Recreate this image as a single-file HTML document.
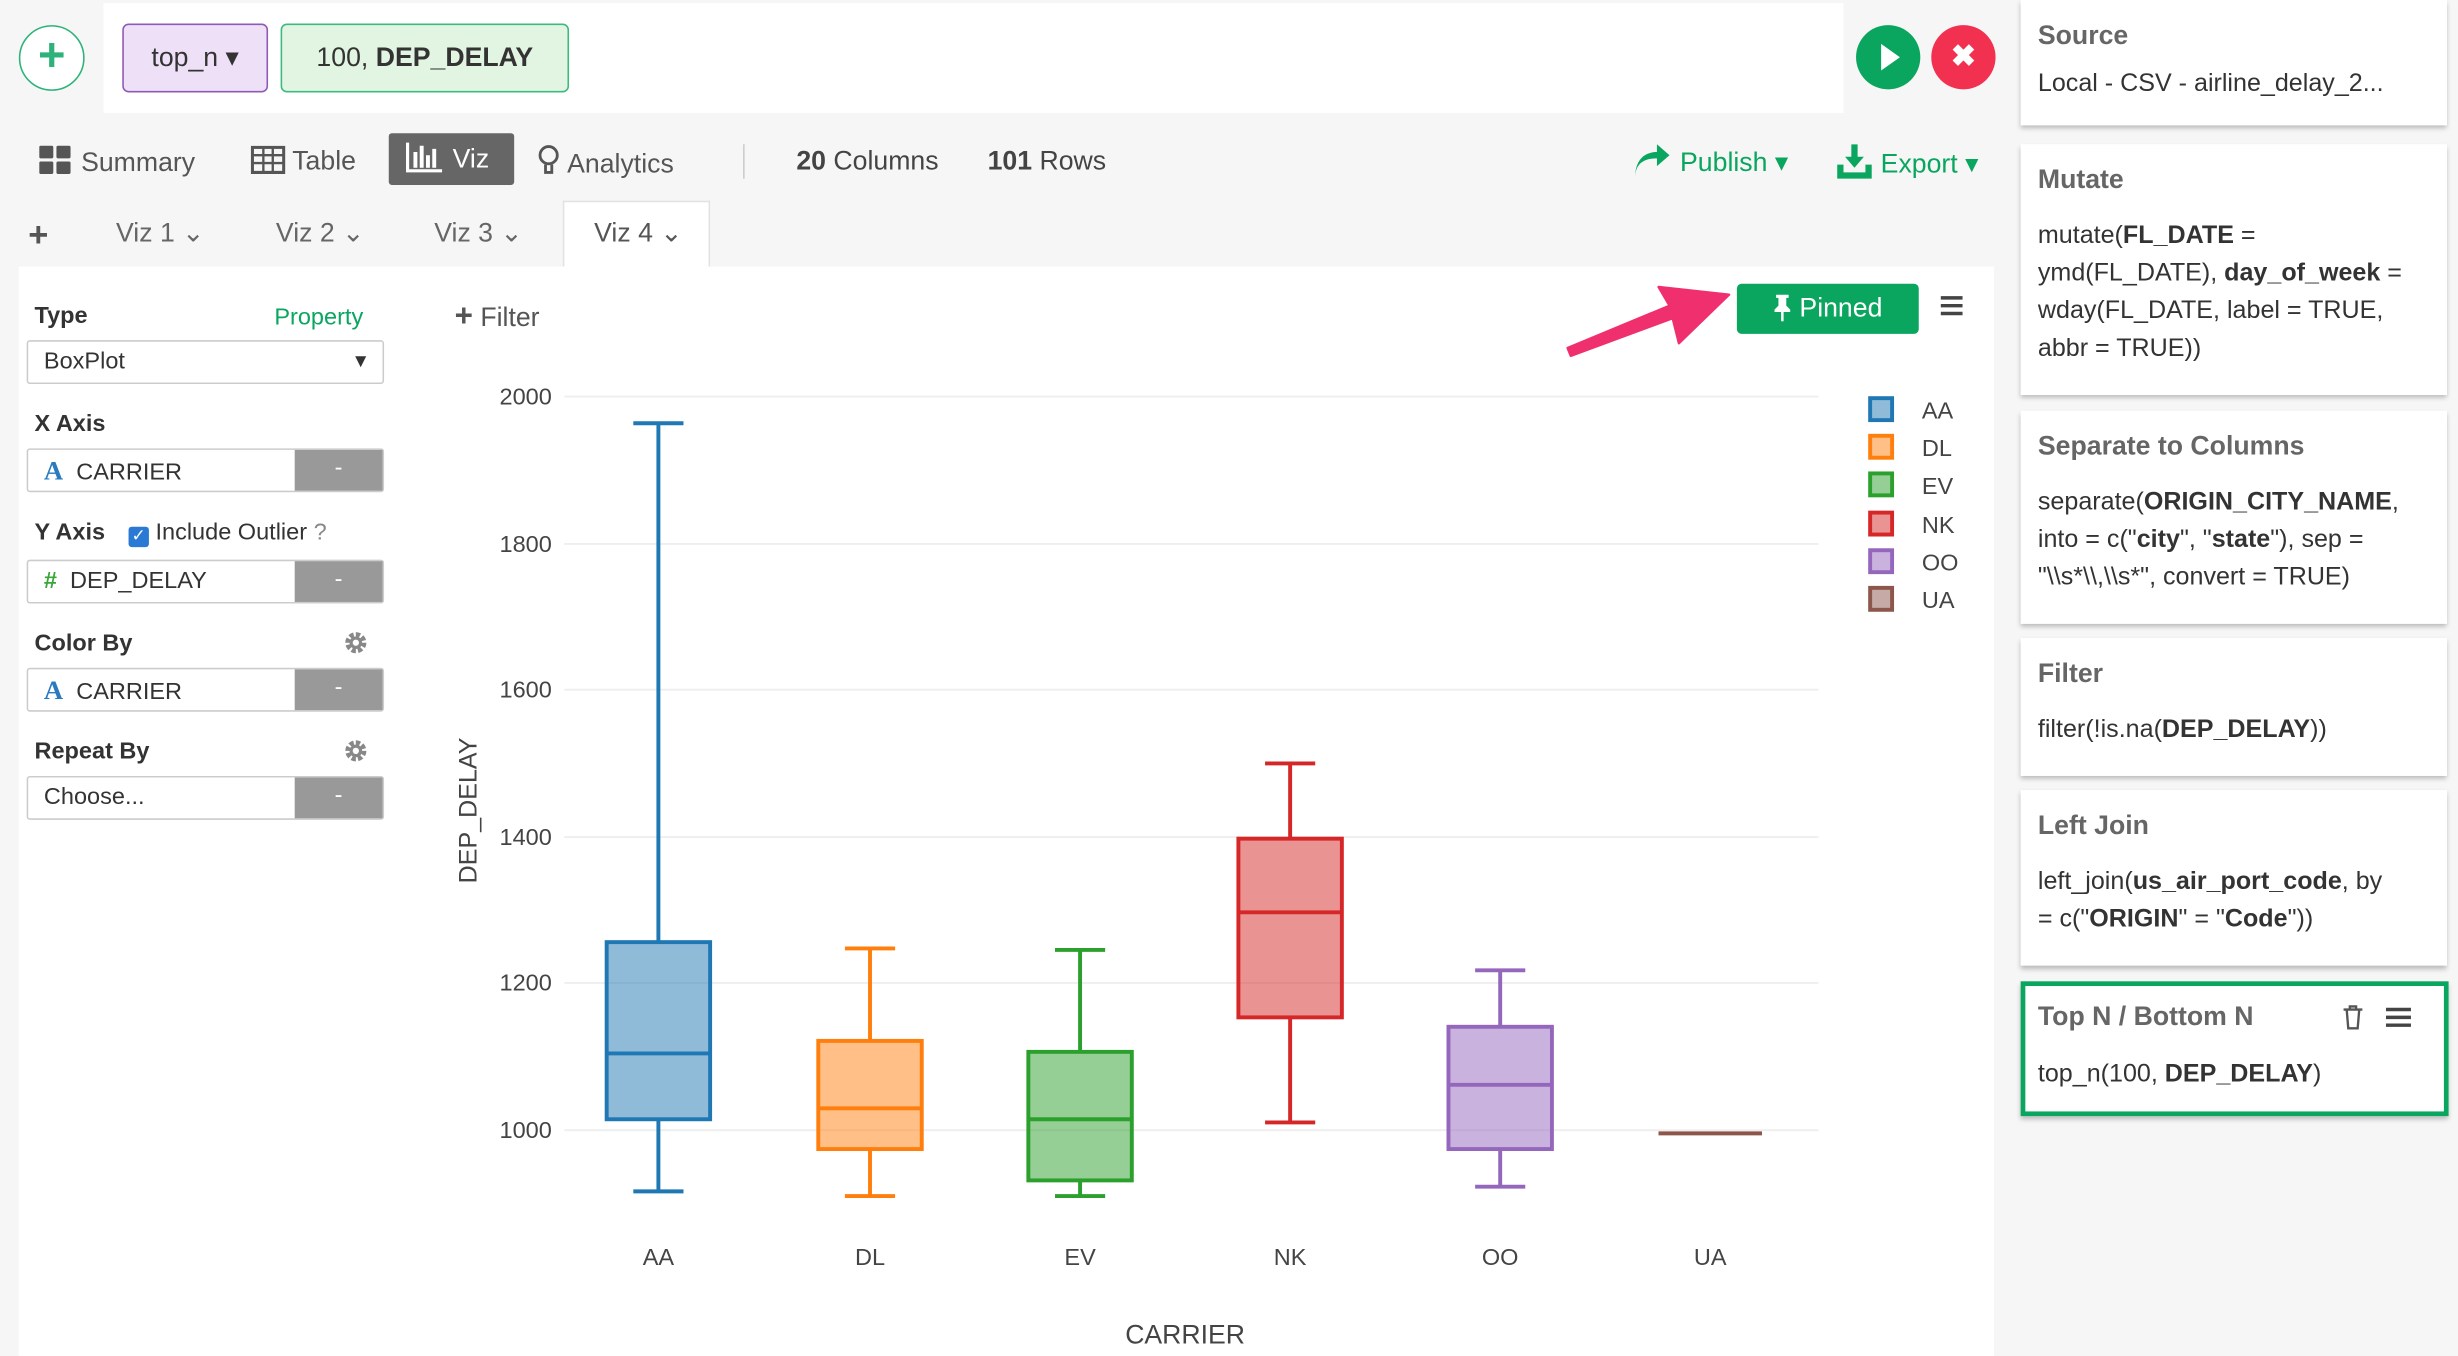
<!DOCTYPE html>
<html><head><meta charset="utf-8"><style>
html,body{margin:0;padding:0;width:2458px;height:1356px;overflow:hidden;background:#f6f6f6;font-family:"Liberation Sans",sans-serif;}
#w{position:absolute;left:0;top:0;width:1568px;height:865px;transform:scale(1.56760);transform-origin:0 0;background:#f6f6f6;color:#333;}
.a{position:absolute;}
.card{position:absolute;left:1289px;width:272px;background:#fff;box-shadow:0 2px 3px rgba(0,0,0,.25);}
.card .t{position:absolute;left:11px;font-size:17px;font-weight:bold;color:#666;}
.card .b{position:absolute;left:11px;right:8px;font-size:16px;line-height:24px;color:#333;}
.lbl{font-size:15px;font-weight:bold;color:#333;}
.inp{position:absolute;left:17px;width:226px;height:26px;border:1px solid #ccc;border-radius:2px;background:#fff;font-size:15px;}
.inp .m{position:absolute;right:0;top:0;width:56px;height:26px;background:#999;color:#fff;text-align:center;line-height:24px;}
.inp .x{position:absolute;left:10px;top:4px;}
</style></head><body><div id="w">
<div class="a" style="left:66px;top:2px;width:1110px;height:70px;background:#fff"></div>
<div class="a" style="left:12px;top:16px;width:40px;height:40px;border:1.5px solid #2db37a;border-radius:50%;background:#fff;color:#2db37a;font-size:30px;text-align:center;line-height:38px;font-weight:bold">+</div>
<div class="a" style="left:78px;top:15px;width:91px;height:42px;background:#eee0f7;border:1.5px solid #8e5ab5;border-radius:4px;font-size:17px;line-height:42px;text-align:center">top_n ▾</div>
<div class="a" style="left:179px;top:15px;width:182px;height:42px;background:#e2f4e2;border:1.5px solid #3dba7d;border-radius:4px;font-size:17px;line-height:42px;text-align:center">100, <b>DEP_DELAY</b></div>
<div class="a" style="left:1184px;top:16px;width:41px;height:41px;border-radius:50%;background:#0aa65f"><svg width="41" height="41"><path d="M16 12 L28 20.5 L16 29Z" fill="#fff"/></svg></div>
<div class="a" style="left:1232px;top:16px;width:41px;height:41px;border-radius:50%;background:#f23050;color:#fff;font-size:19px;font-weight:bold;text-align:center;line-height:41px">✖</div>
<div class="a" style="left:25px;top:92px;font-size:17px;color:#555;line-height:22px">
<svg width="22" height="20" style="vertical-align:-3px"><rect x="0" y="1" width="9" height="8" rx="1" fill="#555"/><rect x="11" y="1" width="9" height="8" rx="1" fill="#555"/><rect x="0" y="11" width="9" height="8" rx="1" fill="#555"/><rect x="11" y="11" width="9" height="8" rx="1" fill="#555"/></svg> Summary</div>
<div class="a" style="left:160px;top:92px;font-size:17px;color:#555;line-height:22px"><svg width="22" height="18" style="vertical-align:-3px"><rect x="1" y="1" width="20" height="16" fill="none" stroke="#555" stroke-width="2"/><path d="M1 6H21M1 11H21M8 1V17M14 1V17" stroke="#555" stroke-width="1.5"/></svg> Table</div>
<div class="a" style="left:248px;top:85px;width:80px;height:33px;background:#666;border-radius:2px;color:#fff;font-size:17px;line-height:33px"><svg width="26" height="22" style="vertical-align:-4px;margin-left:10px"><path d="M2 2V20H24" stroke="#fff" stroke-width="2" fill="none"/><path d="M7 8V18M11 4V18M15 10V18M19 6V18" stroke="#fff" stroke-width="2.5"/></svg> Viz</div>
<div class="a" style="left:342px;top:92px;font-size:17px;color:#555;line-height:22px"><svg width="16" height="22" style="vertical-align:-4px"><circle cx="8" cy="7" r="5.5" fill="none" stroke="#555" stroke-width="1.8"/><path d="M6 13V18H10V13" stroke="#555" stroke-width="1.8" fill="none"/></svg> Analytics</div>
<div class="a" style="left:474px;top:92px;width:1px;height:22px;background:#ccc"></div>
<div class="a" style="left:508px;top:93px;font-size:17px;color:#444"><b>20</b> Columns</div>
<div class="a" style="left:630px;top:93px;font-size:17px;color:#444"><b>101</b> Rows</div>
<div class="a" style="left:1041px;top:92px;font-size:17px;color:#0aa65f"><svg width="26" height="22" style="vertical-align:-5px"><path d="M2 22C2 12 8 9 16 9V14L24 7L16 0V5C7 5 2 11 2 22Z" fill="#0aa65f"/></svg> Publish ▾</div>
<div class="a" style="left:1171px;top:92px;font-size:17px;color:#0aa65f"><svg width="24" height="22" style="vertical-align:-4px"><path d="M10 0H14V8H18L12 15L6 8H10Z M1 13H5V18H19V13H23V22H1Z" fill="#0aa65f"/></svg> Export ▾</div>
<div class="a" style="left:18px;top:137px;font-size:22px;font-weight:bold;color:#555">+</div>
<div class="a" style="left:74px;top:139px;font-size:17px;color:#666">Viz 1 ⌄</div>
<div class="a" style="left:176px;top:139px;font-size:17px;color:#666">Viz 2 ⌄</div>
<div class="a" style="left:277px;top:139px;font-size:17px;color:#666">Viz 3 ⌄</div>
<div class="a" style="left:359px;top:128px;width:92px;height:44px;background:#fff;border:1px solid #e2e2e2;border-bottom:none"></div>
<div class="a" style="left:379px;top:139px;font-size:17px;color:#555">Viz 4 ⌄</div>
<div class="a" style="left:12px;top:170px;width:1260px;height:695px;background:#fff"></div>
<div class="a lbl" style="left:22px;top:193px">Type</div>
<div class="a" style="left:175px;top:194px;font-size:15px;color:#0aa65f">Property</div>
<div class="inp" style="top:217px"><span class="x">BoxPlot</span><span style="position:absolute;right:8px;top:5px;font-size:12px">▼</span></div>
<div class="a lbl" style="left:22px;top:262px">X Axis</div>
<div class="inp" style="top:286px"><span class="x"><b style="color:#2a7ac0;font-family:'Liberation Serif';font-size:17px">A</b>&nbsp; CARRIER</span><span class="m">-</span></div>
<div class="a lbl" style="left:22px;top:331px">Y Axis</div>
<div class="a" style="left:82px;top:331px;font-size:15px;color:#333"><span style="display:inline-block;width:13px;height:13px;background:#2a7ad5;border-radius:2px;color:#fff;font-size:11px;line-height:13px;text-align:center;vertical-align:-1px">✓</span> Include Outlier <span style="color:#888">?</span></div>
<div class="inp" style="top:357px"><span class="x"><b style="color:#3aa53a">#</b>&nbsp; DEP_DELAY</span><span class="m">-</span></div>
<div class="a lbl" style="left:22px;top:402px">Color By</div>
<svg class="a" style="left:219px;top:402px" width="16" height="16"><circle cx="8" cy="8" r="5" fill="none" stroke="#888" stroke-width="3.5" stroke-dasharray="2.6 1.3"/><circle cx="8" cy="8" r="4" fill="#888"/><circle cx="8" cy="8" r="2" fill="#fff"/></svg>
<div class="inp" style="top:426px"><span class="x"><b style="color:#2a7ac0;font-family:'Liberation Serif';font-size:17px">A</b>&nbsp; CARRIER</span><span class="m">-</span></div>
<div class="a lbl" style="left:22px;top:471px">Repeat By</div>
<svg class="a" style="left:219px;top:471px" width="16" height="16"><circle cx="8" cy="8" r="5" fill="none" stroke="#888" stroke-width="3.5" stroke-dasharray="2.6 1.3"/><circle cx="8" cy="8" r="4" fill="#888"/><circle cx="8" cy="8" r="2" fill="#fff"/></svg>
<div class="inp" style="top:495px"><span class="x">Choose...</span><span class="m">-</span></div>
<div class="a" style="left:290px;top:191px;font-size:17px;color:#555"><b style="font-size:20px">+</b> Filter</div>
<div class="a" style="left:1108px;top:181px;width:116px;height:32px;background:#0aa65f;border-radius:3px;color:#fff;font-size:17px;line-height:32px;text-align:center"><svg width="12" height="18" style="vertical-align:-3px"><path d="M2 1H10V3H8.5V8L11 10.5V12H1V10.5L3.5 8V3H2Z" fill="#fff"/><path d="M6 12V18" stroke="#fff" stroke-width="1.6"/></svg> Pinned</div>
<div class="a" style="left:1238px;top:188px;width:14px;height:14px"><svg width="14" height="14"><path d="M0 2H14M0 7H14M0 12H14" stroke="#444" stroke-width="2.2"/></svg></div>
<svg class="a" style="left:995px;top:180px" width="115" height="55"><path d="M7 47 L72 23 L76 39 L108 8 L63 3 L70 15 L5 42 Z" fill="#f0306e" stroke="#f0306e" stroke-width="1.5" stroke-linejoin="round"/></svg>
<svg class="a" style="left:0;top:0" width="1270" height="865" font-family="Liberation Sans" font-size="15" fill="#444">
<g stroke="#eee" stroke-width="1.2"><line x1="360" x2="1160" y1="253" y2="253"/><line x1="360" x2="1160" y1="347" y2="347"/><line x1="360" x2="1160" y1="440" y2="440"/><line x1="360" x2="1160" y1="534" y2="534"/><line x1="360" x2="1160" y1="627" y2="627"/><line x1="360" x2="1160" y1="721" y2="721"/></g>
<g text-anchor="end"><text x="352" y="258">2000</text><text x="352" y="352">1800</text><text x="352" y="445">1600</text><text x="352" y="539">1400</text><text x="352" y="632">1200</text><text x="352" y="726">1000</text></g>
<text transform="translate(304,517) rotate(-90)" text-anchor="middle" font-size="16">DEP_DELAY</text>
<text x="756" y="857" text-anchor="middle" font-size="17">CARRIER</text>
<g text-anchor="middle"><text x="420" y="807">AA</text><text x="555" y="807">DL</text><text x="689" y="807">EV</text><text x="823" y="807">NK</text><text x="957" y="807">OO</text><text x="1091" y="807">UA</text></g>
<g stroke-width="2.5">
<g stroke="#1f77b4"><path d="M420 270V601M420 714V760M404 270H436M404 760H436" fill="none"/><rect x="387" y="601" width="66" height="113" fill="rgba(31,119,180,.5)"/><path d="M387 672H453"/></g>
<g stroke="#ff7f0e"><path d="M555 605V664M555 733V763M539 605H571M539 763H571" fill="none"/><rect x="522" y="664" width="66" height="69" fill="rgba(255,127,14,.5)"/><path d="M522 707H588"/></g>
<g stroke="#2ca02c"><path d="M689 606V671M689 753V763M673 606H705M673 763H705" fill="none"/><rect x="656" y="671" width="66" height="82" fill="rgba(44,160,44,.5)"/><path d="M656 714H722"/></g>
<g stroke="#d62728"><path d="M823 487V535M823 649V716M807 487H839M807 716H839" fill="none"/><rect x="790" y="535" width="66" height="114" fill="rgba(214,39,40,.5)"/><path d="M790 582H856"/></g>
<g stroke="#9467bd"><path d="M957 619V655M957 733V757M941 619H973M941 757H973" fill="none"/><rect x="924" y="655" width="66" height="78" fill="rgba(148,103,189,.5)"/><path d="M924 692H990"/></g>
<g stroke="#8c564b"><path d="M1058 723H1124"/></g>
</g>
<g stroke-width="2.5">
<rect x="1193" y="254" width="14" height="14" stroke="#1f77b4" fill="rgba(31,119,180,.5)"/>
<rect x="1193" y="278" width="14" height="14" stroke="#ff7f0e" fill="rgba(255,127,14,.5)"/>
<rect x="1193" y="302" width="14" height="14" stroke="#2ca02c" fill="rgba(44,160,44,.5)"/>
<rect x="1193" y="327" width="14" height="14" stroke="#d62728" fill="rgba(214,39,40,.5)"/>
<rect x="1193" y="351" width="14" height="14" stroke="#9467bd" fill="rgba(148,103,189,.5)"/>
<rect x="1193" y="375" width="14" height="14" stroke="#8c564b" fill="rgba(140,86,75,.5)"/>
</g>
<g><text x="1226" y="267">AA</text><text x="1226" y="291">DL</text><text x="1226" y="315">EV</text><text x="1226" y="340">NK</text><text x="1226" y="364">OO</text><text x="1226" y="388">UA</text></g>
</svg>
<div class="card" style="top:0;height:80px"><div class="t" style="top:13px">Source</div><div class="b" style="top:42px;white-space:nowrap">Local - CSV - airline_delay_2...</div></div>
<div class="card" style="top:92px;height:160px"><div class="t" style="top:13px">Mutate</div><div class="b" style="top:47px">mutate(<b>FL_DATE</b> = ymd(FL_DATE), <b>day_of_week</b> = wday(FL_DATE, label = TRUE, abbr = TRUE))</div></div>
<div class="card" style="top:262px;height:136px"><div class="t" style="top:13px">Separate to Columns</div><div class="b" style="top:47px">separate(<b>ORIGIN_CITY_NAME</b>, into = c("<b>city</b>", "<b>state</b>"), sep = "\\s*\\,\\s*", convert = TRUE)</div></div>
<div class="card" style="top:407px;height:88px"><div class="t" style="top:13px">Filter</div><div class="b" style="top:47px">filter(!is.na(<b>DEP_DELAY</b>))</div></div>
<div class="card" style="top:504px;height:112px"><div class="t" style="top:13px">Left Join</div><div class="b" style="top:47px">left_join(<b>us_air_port_code</b>, by<br>= c("<b>ORIGIN</b>" = "<b>Code</b>"))</div></div>
<div class="card" style="top:626px;height:86px;border:3px solid #0aa65f;box-sizing:border-box;width:273px"><div class="t" style="top:10px;left:8px">Top N / Bottom N</div><div class="b" style="top:45px;left:8px">top_n(100, <b>DEP_DELAY</b>)</div>
<svg class="a" style="left:202px;top:12px" width="14" height="16"><path d="M1 3H13M5 3V1H9V3M3 3L4 15H10L11 3" stroke="#555" stroke-width="1.5" fill="none"/></svg>
<svg class="a" style="left:230px;top:13px" width="16" height="14"><path d="M0 2H16M0 7H16M0 12H16" stroke="#444" stroke-width="2.2"/></svg></div>
</div></body></html>
